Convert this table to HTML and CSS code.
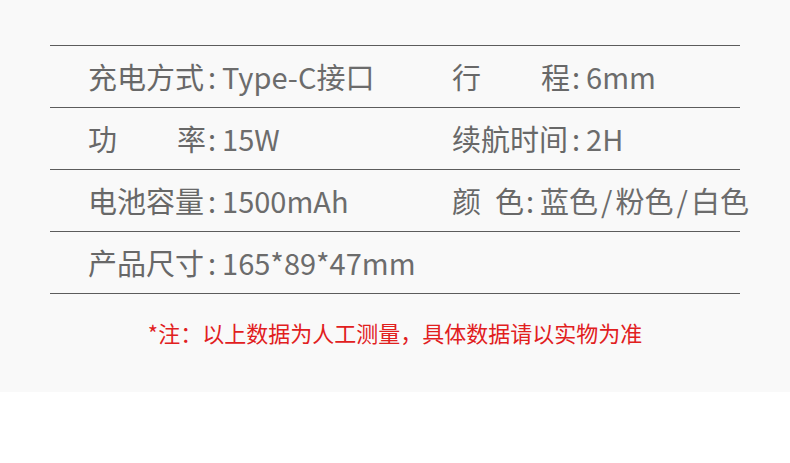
FILE: index.html
```html
<!DOCTYPE html>
<html lang="zh-CN">
<head>
<meta charset="utf-8">
<title>产品参数</title>
<link rel="stylesheet" href="styles.css">
</head>
<body>
<div class="sheet">
  <div class="specs">
    <div class="row">
      <div class="cell"><span class="label">充电方式</span><span class="colon">:</span><span class="value">Type-C接口</span></div>
      <div class="cell"><span class="label spread"><span>行</span><span>程</span></span><span class="colon">:</span><span class="value">6mm</span></div>
    </div>
    <div class="row">
      <div class="cell"><span class="label spread"><span>功</span><span>率</span></span><span class="colon">:</span><span class="value">15W</span></div>
      <div class="cell"><span class="label">续航时间</span><span class="colon">:</span><span class="value">2H</span></div>
    </div>
    <div class="row">
      <div class="cell"><span class="label">电池容量</span><span class="colon">:</span><span class="value">1500mAh</span></div>
      <div class="cell"><span class="label short"><span>颜</span><span>色</span></span><span class="colon">:</span><span class="value">蓝色<span class="sep">/</span>粉色<span class="sep">/</span>白色</span></div>
    </div>
    <div class="row">
      <div class="cell"><span class="label">产品尺寸</span><span class="colon">:</span><span class="value">165*89*47mm</span></div>
      <div class="cell"></div>
    </div>
  </div>
  <p class="note">*注：以上数据为人工测量，具体数据请以实物为准</p>
</div>
</body>
</html>
```

FILE: styles.css
```css
html, body {
  margin: 0;
  padding: 0;
  background: #ffffff;
}

body {
  font-family: "Noto Sans CJK SC", "Noto Sans", sans-serif;
}

.sheet {
  background: #f9f9f9;
  height: 392px;
  padding-top: 45px;
  box-sizing: border-box;
}

.specs {
  margin: 0 50px;
  border-top: 1px solid #5c5c5c;
}

.row {
  display: grid;
  grid-template-columns: 364px 1fr;
  padding-left: 38px;
  height: 61px;
  align-items: center;
  border-bottom: 1px solid #5c5c5c;
}

.cell {
  display: flex;
  align-items: center;
  font-size: 29px;
  color: #686868;
  white-space: nowrap;
  line-height: 1;
}

.label {
  display: inline-flex;
  width: 118px;
}

.spread {
  justify-content: space-between;
}

.short {
  gap: 14px;
  width: auto;
}

.colon {
  margin: 0 6px 0 2px;
}

.value {
  color: #6c6c6c;
}

.sep {
  margin: 0 3px;
}

.note {
  margin: 23px 0 0;
  text-align: center;
  color: #e1201e;
  font-size: 22px;
  line-height: 30px;
}
```
